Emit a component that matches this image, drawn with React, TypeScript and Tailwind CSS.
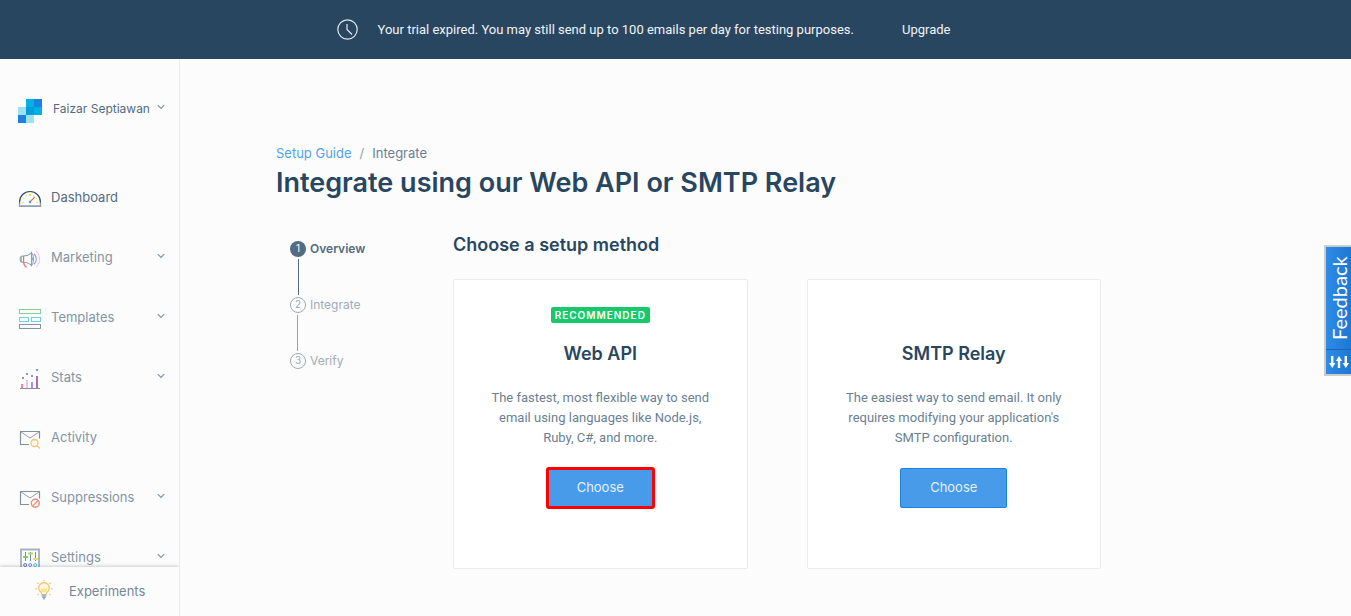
import React from 'react';

const Chevron = () => (
  <svg className="mb-1 h-2 w-2 shrink-0" viewBox="0 0 8 8" fill="none" stroke="#7f93a6" strokeWidth="1.2" aria-hidden="true">
    <path d="M.8 2.2 4 5.400 7.200 2.200" />
  </svg>
);

const Logo = () => (
  <svg className="h-6 w-6 shrink-0" viewBox="0 0 24 24" shapeRendering="crispEdges" aria-hidden="true">
    <path fill="#9de1f3" d="M0 8h8v8H0zM8 16h8v8H8z" />
    <path fill="#1a82e2" d="M0 16h8v8H0zM16 0h8v8h-8z" />
    <path fill="#00b2e3" d="M8 0h8v8H8zM16 8h8v8h-8z" />
    <path fill="#009dd9" d="M8 8h8v8H8z" />
  </svg>
);

const iconProps = {
  className: 'mt-0.5 h-6 w-6 shrink-0',
  viewBox: '0 0 24 24',
  fill: 'none',
  'aria-hidden': true,
} as const;

const DashboardIcon = () => (
  <svg {...iconProps}>
    <path d="M1.6 17v-2C1.6 9 6.2 4.500 12 4.500S22.400 9 22.400 15v2" stroke="#294661" strokeWidth="1.1" />
    <path d="M1.500 15.500v3.900h21v-3.900M1.500 18.900h21" stroke="#8f9fb0" strokeWidth="1.300" />
    <path d="M4 15.500h2M18 15.500h2M5.200 11.200l1 .6M18.800 11.200l-1 .6M8 8.300l.6.9M16 8.300l-.6.9" stroke="#f7d558" strokeWidth="1.2" />
    <path d="M11 7h2v2h-2z" fill="#f9dc5c" />
    <path d="m12.500 14.300 4.300-4.500" stroke="#e8705c" strokeWidth="1.200" />
    <circle cx="12" cy="15" r="1.200" fill="#3d9bea" />
  </svg>
);

const MarketingIcon = () => (
  <svg {...iconProps}>
    <path d="M13.500 5.500v13.200C11.500 16.500 9 15.300 5.500 15.300H4A2.300 3.200 0 0 1 4 9h1.500c3.500 0 6-1.300 8-3.500Z" stroke="#8f9fae" strokeWidth="1.100" />
    <path d="M13.500 5.500c1.300 1 1.900 3.500 1.900 6.600s-.6 5.600-1.900 6.600M4 9c-.9 1.600-.9 4.600 0 6.300" stroke="#8f9fae" />
    <path d="M14.800 10.500v3" stroke="#68b5f3" strokeWidth="1.800" />
    <path d="M5.600 9v5c0 3 1 5.500 3.200 6.200" stroke="#db7777" strokeWidth="1.200" />
    <path d="M16 7c1.700 1.200 2.300 3 2.300 5.200s-.8 4-2.300 5.100" stroke="#b486d1" strokeWidth="1.100" />
    <path d="M18 4c2.400 1.900 3.500 4.600 3.500 8.100S20.400 18.200 18 20" stroke="#e9cdf1" strokeWidth="1.100" />
  </svg>
);

const TemplatesIcon = () => (
  <svg {...iconProps} shapeRendering="crispEdges">
    <path d="M1.500 2.500h21v4h-21z" stroke="#8acb91" />
    <path d="M1.500 10.500h9v4h-9zM13.500 10.500h9v4h-9z" stroke="#67d3e3" />
    <path d="M1.500 17.500h21v4h-21z" stroke="#8794a6" />
  </svg>
);

const StatsIcon = () => (
  <svg {...iconProps} shapeRendering="crispEdges">
    <path d="M3 17h2v4H3z" fill="#fb7fa9" />
    <path d="M8 13h2v8H8z" fill="#e6c5f0" />
    <path d="M13 15h2v6h-2z" fill="#a38cf4" />
    <path d="M18 9h2v12h-2z" fill="#a66dbd" />
    <path d="M4 10h2v2H4zM8 6h2v2H8zM13 8h2v2h-2zM18 2h2v2h-2z" fill="#8a99a9" />
    <path d="M2 21h20v1H2z" fill="#8190a2" />
  </svg>
);

const Envelope = () => (
  <>
    <path d="M11 17.500H2.500V4.500h19v7" stroke="#7e91a5" strokeWidth="1.200" />
    <path d="m3 5 9 6 9-6" stroke="#8fa0b1" />
  </>
);

const ActivityIcon = () => (
  <svg {...iconProps}>
    <Envelope />
    <circle cx="16.500" cy="16" r="3.500" stroke="#f9c46e" strokeWidth="1.300" />
    <path d="m19 18.500 3 3" stroke="#f9c46e" strokeWidth="1.300" />
  </svg>
);

const SuppressionsIcon = () => (
  <svg {...iconProps}>
    <Envelope />
    <circle cx="17.300" cy="16.300" r="4" stroke="#ea8b76" strokeWidth="1.400" />
    <path d="m14.500 19.100 5.600-5.600" stroke="#ea8b76" strokeWidth="1.300" />
  </svg>
);

const SettingsIcon = () => (
  <svg {...iconProps}>
    <path d="M3 2.500h18v21H3z" stroke="#a5b1bd" strokeWidth="1.800" />
    <path d="M7.500 5v9M12.500 5v9M17.500 5v9" stroke="#75899b" />
    <path d="M5 10h5" stroke="#7fcb7e" strokeWidth="2" />
    <path d="M10 6.500h5" stroke="#b3d774" strokeWidth="2" />
    <path d="M15 12h5" stroke="#e7df62" strokeWidth="2" />
    <circle cx="7.200" cy="18" r="1.500" stroke="#7568c2" />
    <circle cx="12.200" cy="18" r="1.500" stroke="#5a9fe0" />
    <circle cx="17.200" cy="18" r="1.500" stroke="#52c4da" />
  </svg>
);

const BulbIcon = () => (
  <svg className="mb-1 h-5 w-5 shrink-0" viewBox="0 0 20 20" fill="none" aria-hidden="true">
    <path d="M7.500 14v-1.400A5.300 5.300 0 1 1 12.500 12.600V14" fill="#fff8df" stroke="#f9c169" strokeWidth="1.200" />
    <path d="M7.300 7.500 9 9.500l1-1 1 1 1.700-2v2.800l-1.700 1.900H9l-1.700-1.900z" fill="#fbe475" />
    <path d="M7.500 15h5M8 17h4M9.200 18.700h1.600" stroke="#92a2b2" strokeWidth="1.700" />
    <path d="M10 0v1.500M1.200 8.800h1.600M17.200 8.800h1.600M3.400 2.700l1.200 1.100M16.600 2.700l-1.200 1.100M3.400 15l1.200-1.100M16.600 15l-1.200-1.100" stroke="#f9c169" strokeWidth="1.200" />
  </svg>
);

const navItems = [
  { label: 'Dashboard', Icon: DashboardIcon, expandable: false, active: true },
  { label: 'Marketing', Icon: MarketingIcon, expandable: true, active: false },
  { label: 'Templates', Icon: TemplatesIcon, expandable: true, active: false },
  { label: 'Stats', Icon: StatsIcon, expandable: true, active: false },
  { label: 'Activity', Icon: ActivityIcon, expandable: false, active: false },
  { label: 'Suppressions', Icon: SuppressionsIcon, expandable: true, active: false },
  { label: 'Settings', Icon: SettingsIcon, expandable: true, active: false },
];

const TrialBanner = () => (
  <header className="flex h-[59px] shrink-0 items-center justify-center bg-[#294661] pr-16 font-['Roboto',sans-serif] text-[13px] text-[#f1f4f6]">
    <svg className="mr-5 h-[21px] w-[21px] shrink-0" viewBox="0 0 21 21" fill="none" stroke="#e3e8ec" aria-hidden="true">
      <circle cx="10.500" cy="10.500" r="9.700" strokeWidth="1.200" />
      <path d="M10 5v5.500l5 5" strokeWidth="1.200" />
    </svg>
    <p>Your trial expired. You may still send up to 100 emails per day for testing purposes.</p>
    <a href="#upgrade" className="ml-12">Upgrade</a>
  </header>
);

const Sidebar = () => (
  <aside className="flex w-[180px] shrink-0 flex-col overflow-hidden border-r border-[#e9ebed]">
    <button type="button" className="flex h-[109px] w-full shrink-0 items-center pr-3.5 pb-1.5 pl-[18px] text-xs text-[#546b81]">
      <Logo />
      <span className="mb-1 ml-[11px] flex-1 text-left whitespace-nowrap">Faizar Septiawan</span>
      <span className="mb-1"><Chevron /></span>
    </button>
    <nav className="min-h-0 flex-1 overflow-hidden">
      <ul>
        {navItems.map(({ label, Icon, expandable, active }) => (
          <li key={label}>
            <a
              href={'#' + label.toLowerCase()}
              className={
                active
                  ? 'flex h-[60px] items-center pr-3.5 pl-[18px] text-[13px] text-[#546b81]'
                  : 'flex h-[60px] items-center pr-3.5 pl-[18px] text-[13px] text-[#8494a4]'
              }
            >
              <Icon />
              <span className="ml-[9px] flex-1">{label}</span>
              {expandable && <Chevron />}
            </a>
          </li>
        ))}
      </ul>
    </nav>
    <a
      href="#experiments"
      className="z-10 flex h-[49px] shrink-0 items-center gap-[15px] bg-[#fcfcfc] pl-[34px] text-[13px] text-[#75879a] shadow-[0_0_4px_rgba(0,0,0,0.3)]"
    >
      <BulbIcon />
      Experiments
    </a>
  </aside>
);

const steps = ['Overview', 'Integrate', 'Verify'];

const Stepper = () => (
  <ol className="w-[177px] shrink-0 pt-2.5 pl-3.5 text-xs">
    {steps.map((step, i) => (
      <li key={step} className={i === 0 ? 'text-[#546b81]' : 'text-[#9fabb8]'}>
        <div className="flex h-4 items-center gap-1">
          <span
            className={
              i === 0
                ? 'flex h-4 w-4 items-center justify-center rounded-full bg-[#546b81] text-[10px] text-white'
                : 'flex h-4 w-4 items-center justify-center rounded-full border border-[#9fabb8] text-[10px]'
            }
          >
            {i + 1}
          </span>
          <span className={i === 0 ? 'font-semibold' : ''}>{step}</span>
        </div>
        {i < steps.length - 1 && (
          <div className={i === 0 ? 'my-0.5 ml-2 h-9 w-px bg-[#546b81]' : 'my-0.5 ml-[7px] h-9 w-px bg-[#94a1ae]'} />
        )}
      </li>
    ))}
  </ol>
);

type MethodProps = { title: string; text: string; recommended?: boolean };

const MethodCard = ({ title, text, recommended }: MethodProps) => (
  <section className="flex flex-1 flex-col items-center rounded-xs border border-[#e9ebed] bg-white px-8 pt-[27px] pb-[60px] text-center">
    <div className="h-4">
      {recommended && (
        <span className="block rounded-xs bg-[#18c96c] px-1 text-[10px]/4 font-semibold tracking-[1px] text-white">RECOMMENDED</span>
      )}
    </div>
    <h3 className="mt-4 text-lg/[30px] font-semibold text-[#294661]">{title}</h3>
    <p className="mt-[19px] font-['Roboto',sans-serif] text-[13px]/5 text-[#6b7f93]">{text}</p>
    <button
      type="button"
      className={
        recommended
          ? 'mt-5 h-10 w-[107px] rounded-xs border border-[#1a82e2] bg-[#489be8] text-[13px] text-[#e4f0fb] outline-3 -outline-offset-2 outline-[#ff0000]'
          : 'mt-5 h-10 w-[107px] rounded-xs border border-[#1a82e2] bg-[#489be8] text-[13px] text-[#e4f0fb]'
      }
    >
      Choose
    </button>
  </section>
);

const FeedbackTab = () => (
  <button
    type="button"
    className="fixed top-[245px] right-0 flex h-[131px] w-[27px] flex-col items-center border-2 border-r-0 border-[#cccccc] bg-linear-to-r from-[#2e8be6] to-[#1c78d2] text-white"
  >
    <span className="flex w-full flex-1 rotate-180 items-center justify-center font-['Lato',sans-serif] text-xl/6 [writing-mode:vertical-rl]">
      Feedback
    </span>
    <span className="flex h-[25px] w-full items-center justify-center border-t border-[#1767b8]">
      <svg className="h-3.5 w-5" viewBox="0 0 20 14" aria-hidden="true">
        <path d="M2 1h2.400v7H6.400L3.200 13 0 8h2zM8.800 13h2.400V6h2L10 1 6.800 6h2zM15.600 1H18v7h2l-3.200 5-3.200-5h2z" fill="#fff" />
      </svg>
    </span>
  </button>
);

export default function App() {
  return (
    <div className="flex h-screen flex-col bg-[#fcfcfc] font-['Inter',sans-serif]">
      <TrialBanner />
      <div className="flex min-h-0 flex-1">
        <Sidebar />
        <main className="min-w-0 flex-1 overflow-auto">
          <div className="mx-auto max-w-[979px] pt-[84px]">
            <nav aria-label="Breadcrumb" className="flex gap-2 text-[13px]/5">
              <a href="#guide" className="text-[#50a3ea]">Setup Guide</a>
              <span className="text-[#8f9dab]">/</span>
              <span className="text-[#6b7f93]">Integrate</span>
            </nav>
            <h1 className="text-[27px]/10 font-semibold text-[#294661]">Integrate using our Web API or SMTP Relay</h1>
            <div className="mt-7 flex">
              <Stepper />
              <div className="max-w-[648px] flex-1">
                <h2 className="text-lg/7 font-semibold text-[#294661]">Choose a setup method</h2>
                <div className="mt-5 flex gap-[59px]">
                  <MethodCard
                    recommended
                    title="Web API"
                    text="The fastest, most flexible way to send email using languages like Node.js, Ruby, C#, and more."
                  />
                  <MethodCard
                    title="SMTP Relay"
                    text="The easiest way to send email. It only requires modifying your application's SMTP configuration."
                  />
                </div>
              </div>
            </div>
          </div>
        </main>
      </div>
      <FeedbackTab />
    </div>
  );
}
